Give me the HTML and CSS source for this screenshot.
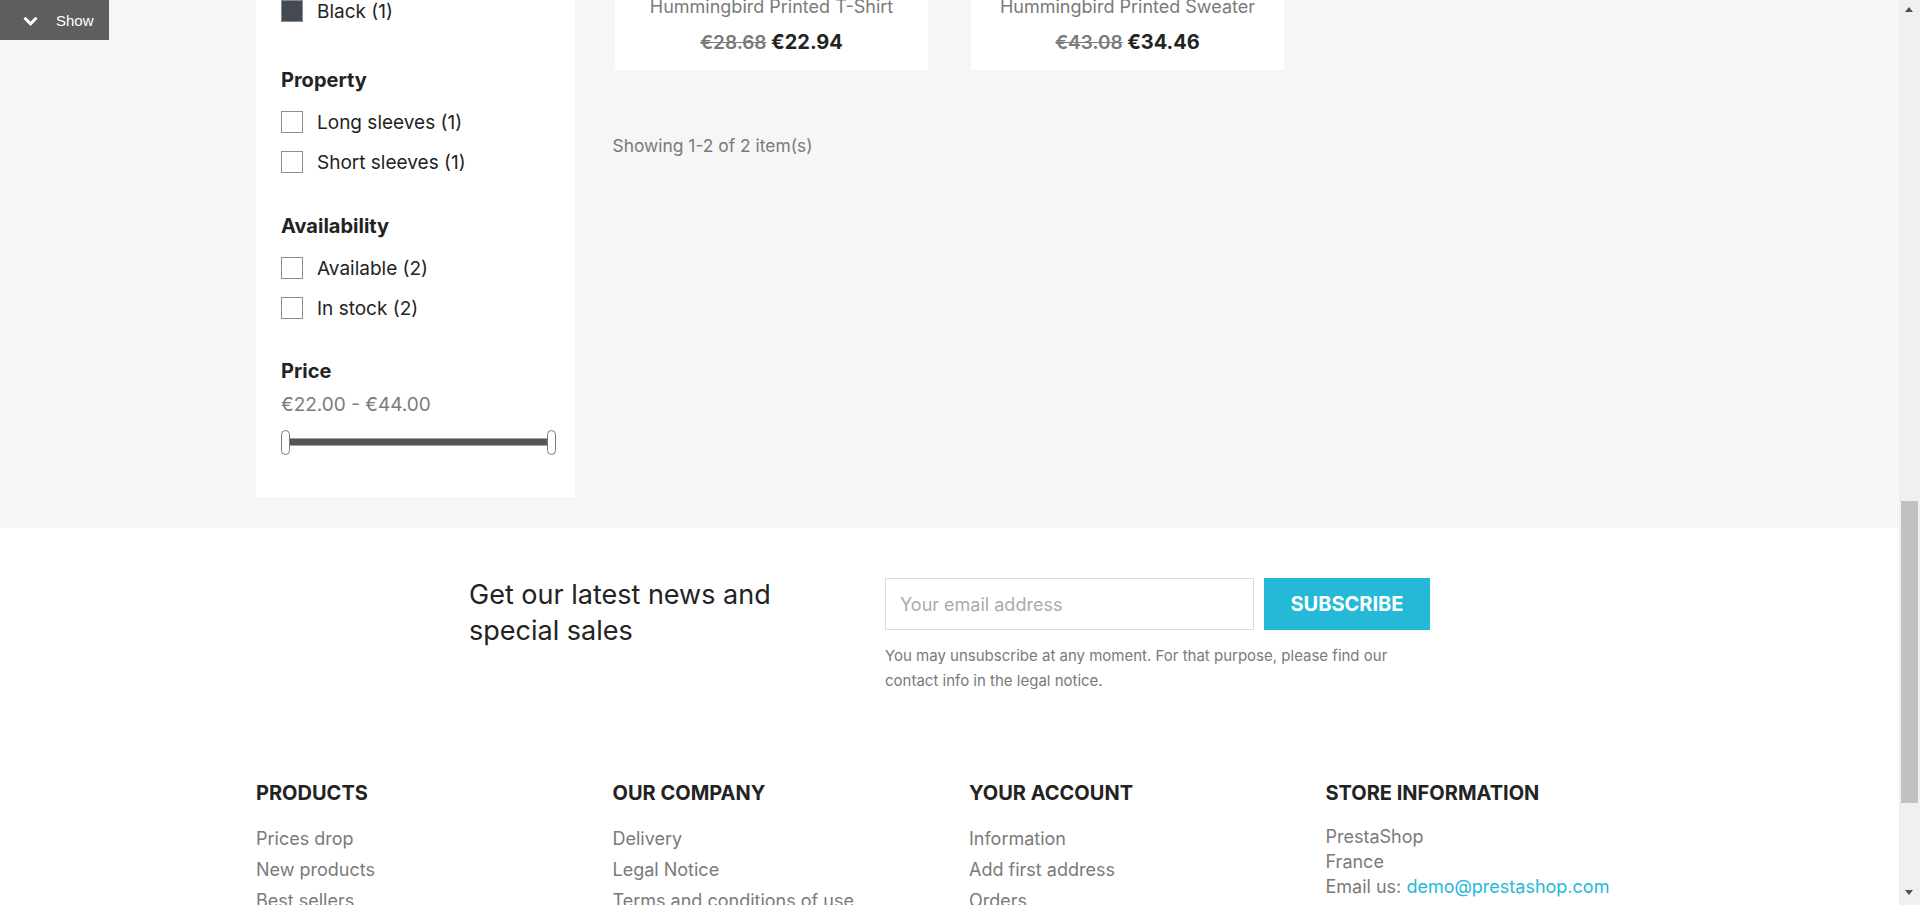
FILE: index.html
```html
<!DOCTYPE html>
<html lang="en">
<head>
<meta charset="utf-8">
<title>Men - Clothes</title>
<link rel="stylesheet" href="styles.css">
</head>
<body>
<div class="page">
  <section class="main-area">
    <div class="container">
      <div class="row">
        <aside class="col-side">
          <div class="facets">
            <div class="facet facet-color">
              <div class="opt"><span class="box swatch"></span><span class="opt-label">Black (1)</span></div>
            </div>
            <div class="facet">
              <h4 class="facet-title">Property</h4>
              <div class="opt"><span class="box"></span><span class="opt-label">Long sleeves (1)</span></div>
              <div class="opt"><span class="box"></span><span class="opt-label">Short sleeves (1)</span></div>
            </div>
            <div class="facet">
              <h4 class="facet-title">Availability</h4>
              <div class="opt"><span class="box"></span><span class="opt-label">Available (2)</span></div>
              <div class="opt"><span class="box"></span><span class="opt-label">In stock (2)</span></div>
            </div>
            <div class="facet facet-price">
              <h4 class="facet-title">Price</h4>
              <p class="range-label">€22.00 - €44.00</p>
              <div class="slider"><span class="handle"></span><span class="track"></span><span class="handle"></span></div>
            </div>
          </div>
        </aside>
        <main class="col-main">
          <div class="products">
            <article class="card">
              <h3 class="card-name">Hummingbird Printed T-Shirt</h3>
              <div class="card-price"><s class="old">€28.68</s> <span class="now">€22.94</span></div>
            </article>
            <article class="card">
              <h3 class="card-name">Hummingbird Printed Sweater</h3>
              <div class="card-price"><s class="old">€43.08</s> <span class="now">€34.46</span></div>
            </article>
          </div>
          <p class="count">Showing 1-2 of 2 item(s)</p>
        </main>
      </div>
    </div>
  </section>

  <footer class="footer">
    <div class="newsletter">
      <p class="nl-title">Get our latest news and special sales</p>
      <div class="nl-form">
        <div class="nl-inputs">
          <input class="nl-email" type="email" placeholder="Your email address">
          <button class="nl-btn" type="button">SUBSCRIBE</button>
        </div>
        <p class="nl-note">You may unsubscribe at any moment. For that purpose, please find our contact info in the legal notice.</p>
      </div>
    </div>

    <div class="container">
      <div class="row links">
        <div class="col-4">
          <h4 class="links-title">Products</h4>
          <ul class="link-list">
            <li>Prices drop</li>
            <li>New products</li>
            <li>Best sellers</li>
          </ul>
        </div>
        <div class="col-4">
          <h4 class="links-title">Our company</h4>
          <ul class="link-list">
            <li>Delivery</li>
            <li>Legal Notice</li>
            <li>Terms and conditions of use</li>
          </ul>
        </div>
        <div class="col-4">
          <h4 class="links-title">Your account</h4>
          <ul class="link-list">
            <li>Information</li>
            <li>Add first address</li>
            <li>Orders</li>
          </ul>
        </div>
        <div class="col-4">
          <h4 class="links-title">Store information</h4>
          <div class="store">
            <div>PrestaShop</div>
            <div>France</div>
            <div>Email us: <a class="mail" href="#">demo@prestashop.com</a></div>
          </div>
        </div>
      </div>
    </div>
  </footer>
</div>

<button class="debug-toggle" type="button">
  <svg class="chev" width="15" height="10" viewBox="0 0 15 10"><polyline points="1.5,1.8 7.5,7.8 13.5,1.8" fill="none" stroke="#fff" stroke-width="3"/></svg>
  <span>Show</span>
</button>

<div class="scrollbar">
  <span class="sb-arrow sb-up"></span>
  <span class="sb-thumb"></span>
  <span class="sb-arrow sb-down"></span>
</div>
</body>
</html>
```

FILE: styles.css
```css
html, body {
  margin: 0;
  padding: 0;
  height: 905px;
  overflow: hidden;
  background: #fff;
}

body {
  font-family: Inter, "Liberation Sans", Arial, sans-serif;
  color: #232323;
}

.page {
  width: 1899px;
}

.container {
  width: 1426px;
  margin-left: 244px;
}

.row {
  display: flex;
}

/* ---------- main (gray) area ---------- */
.main-area {
  background: #f6f6f6;
  margin-top: -9px;
  padding-bottom: 31px;
}

.col-side {
  width: 356.5px;
  padding: 0 12px;
  box-sizing: border-box;
}

.col-main {
  width: 1069.5px;
  padding: 0 12px;
  box-sizing: border-box;
}

.facets {
  width: 319px;
  background: #fff;
  padding: 0 19px 42px 25px;
  box-sizing: border-box;
}

.facet + .facet {
  margin-top: 30px;
}

.facet + .facet-price {
  margin-top: 29px;
}

.facet-color {
  padding-bottom: 5px;
}

.facet-title {
  margin: 0 0 8px;
  font-size: 20px;
  line-height: 28px;
  font-weight: 700;
  color: #232323;
}

.opt {
  display: flex;
  align-items: center;
  height: 40px;
  font-size: 19px;
  color: #232323;
}

.box {
  width: 22px;
  height: 22px;
  box-sizing: border-box;
  border: 1px solid #8f8f8f;
  background: #fff;
  margin-right: 14px;
  flex: none;
}

.box.swatch {
  background: #434a54;
  border-color: #8a8a8a;
}

.range-label {
  margin: 5px 0 0;
  font-size: 19px;
  line-height: 24px;
  color: #7a7a7a;
}

.slider {
  display: flex;
  align-items: center;
  margin-top: 12px;
  height: 26px;
}

.handle {
  width: 9px;
  height: 25px;
  box-sizing: border-box;
  border: 1px solid #7b7b7b;
  border-radius: 5px;
  background: #fff;
  flex: none;
  position: relative;
  z-index: 1;
}

.track {
  flex: 1;
  height: 8px;
  box-sizing: border-box;
  background: #555;
  border-top: 1px solid #a3a3a3;
  border-bottom: 1px solid #a3a3a3;
  margin: 0 -1px;
}

.products {
  display: grid;
  grid-template-columns: repeat(3, 313px);
  column-gap: 43px;
  margin-left: 2.5px;
}

.card {
  background: #fff;
  text-align: center;
  padding: 4px 0 13px;
}

.card-name {
  margin: 0;
  font-size: 18px;
  line-height: 24px;
  font-weight: 400;
  color: #7a7a7a;
}

.card-price {
  margin-top: 9px;
  line-height: 28px;
}

.card-price .old {
  font-size: 19px;
  font-weight: 600;
  color: #7a7a7a;
}

.card-price .now {
  font-size: 20px;
  font-weight: 700;
  color: #232323;
}

.count {
  margin: 64px 0 0;
  font-size: 17.4px;
  line-height: 24px;
  color: #7a7a7a;
}

/* ---------- footer ---------- */
.footer {
  background: #fff;
}

.newsletter {
  width: 961px;
  margin: 0 auto;
  padding-top: 50px;
  display: flex;
  align-items: flex-start;
}

.nl-title {
  width: 416px;
  padding-right: 80px;
  box-sizing: border-box;
  margin: -1px 0 0;
  font-size: 27px;
  line-height: 36px;
  color: #232323;
}

.nl-form {
  width: 545px;
}

.nl-inputs {
  display: flex;
}

.nl-email {
  width: 369px;
  height: 52px;
  box-sizing: border-box;
  border: 1px solid #dcdcdc;
  padding: 0 14px;
  font-family: Inter, "Liberation Sans", sans-serif;
  font-size: 18px;
  color: #232323;
  outline: none;
}

.nl-email::placeholder {
  color: #ababab;
}

.nl-btn {
  margin-left: 10px;
  width: 166px;
  height: 52px;
  border: none;
  background: #24b9d7;
  color: #fff;
  font-family: Inter, "Liberation Sans", sans-serif;
  font-size: 20px;
  font-weight: 700;
  padding: 0;
}

.nl-note {
  margin: 13px 0 0;
  font-size: 15px;
  line-height: 25px;
  color: #7a7a7a;
}

.links {
  margin-top: 86px;
}

.col-4 {
  width: 356.5px;
  padding: 0 12px;
  box-sizing: border-box;
}

.links-title {
  margin: 0;
  font-size: 20px;
  line-height: 28px;
  font-weight: 700;
  text-transform: uppercase;
  color: #232323;
}

.link-list {
  list-style: none;
  margin: 16px 0 0;
  padding: 0;
  font-size: 18px;
  line-height: 31px;
  color: #7a7a7a;
}

.store {
  margin-top: 17px;
  font-size: 18px;
  line-height: 25px;
  color: #7a7a7a;
}

.mail {
  color: #24b9d7;
  text-decoration: none;
}

/* ---------- overlays ---------- */
.debug-toggle {
  position: fixed;
  top: 0;
  left: 0;
  width: 109px;
  height: 40px;
  margin: 0;
  border: none;
  background: #5e5e5e;
  display: flex;
  align-items: center;
  padding: 0 0 0 23px;
  box-sizing: border-box;
  color: #fff;
  font-family: "Liberation Sans", Arial, sans-serif;
  font-size: 15px;
}

.debug-toggle .chev {
  margin-right: 18px;
  margin-top: 1px;
}

.scrollbar {
  position: fixed;
  top: 0;
  right: 0;
  width: 21px;
  height: 905px;
  background: #f0f0f0;
}

.sb-thumb {
  position: absolute;
  top: 501px;
  left: 2px;
  width: 17px;
  height: 302px;
  background: #c1c1c1;
}

.sb-arrow {
  position: absolute;
  left: 6px;
  width: 0;
  height: 0;
  border-left: 4.5px solid transparent;
  border-right: 4.5px solid transparent;
}

.sb-up {
  top: 7px;
  border-bottom: 5px solid #505050;
}

.sb-down {
  top: 890px;
  border-top: 5px solid #505050;
}
```
